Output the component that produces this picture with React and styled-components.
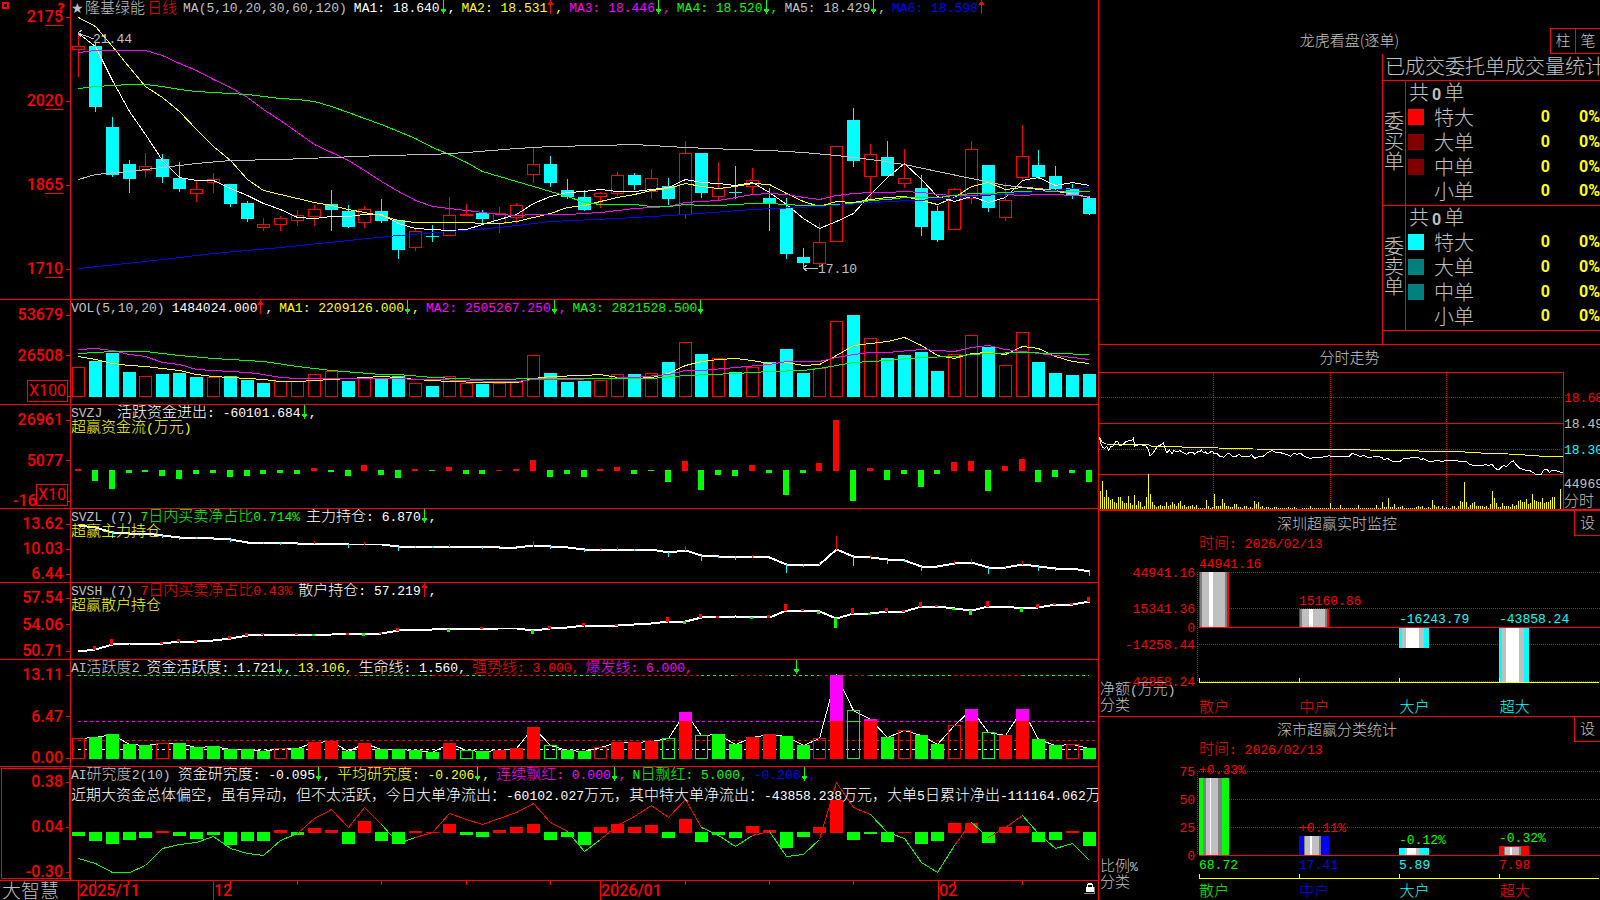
import React from "react";
import styled, { createGlobalStyle } from "styled-components";

const RED = "#ff0000";
const GREEN = "#00ff00";
const CYAN = "#00ffff";
const YELLOW = "#ffff00";
const MAGENTA = "#ff00ff";
const BLUE = "#0000ff";
const WHITE = "#ffffff";
const SILVER = "#c0c0c0";
const GRAY = "#808080";

/* ---------- data ---------- */

// [rising or falling, high, body top, body bottom, low]
const candles = [
  ["r", 33, 46, 50, 77], ["c", 43, 46, 107, 112], ["c", 117, 127, 175, 177], ["c", 160, 164, 179, 193],
  ["r", 153, 166, 171, 177], ["c", 154, 159, 177, 183], ["c", 162, 178, 189, 192], ["r", 181, 189, 194, 202],
  ["r", 173, 179, 183, 193], ["c", 184, 184, 204, 207], ["c", 201, 203, 219, 222], ["r", 218, 224, 228, 231],
  ["r", 216, 218, 225, 231], ["r", 210, 215, 221, 226], ["r", 205, 209, 217, 226], ["c", 190, 204, 210, 231],
  ["c", 205, 211, 227, 228], ["r", 206, 209, 223, 228], ["c", 199, 211, 221, 223], ["c", 220, 220, 250, 259],
  ["r", 229, 231, 248, 251], ["c", 225, 236, 237, 242], ["r", 197, 215, 236, 236], ["r", 204, 214, 216, 216],
  ["c", 210, 213, 219, 225], ["r", 207, 213, 224, 233], ["r", 203, 205, 218, 223], ["r", 148, 164, 175, 183],
  ["c", 156, 164, 183, 187], ["c", 179, 190, 197, 199], ["c", 190, 197, 210, 211], ["r", 192, 193, 197, 208],
  ["r", 172, 175, 194, 196], ["c", 173, 175, 185, 190], ["r", 169, 178, 192, 199], ["c", 178, 186, 199, 205],
  ["r", 141, 153, 215, 219], ["c", 153, 153, 193, 198], ["r", 162, 188, 197, 200], ["c", 166, 192, 193, 199],
  ["r", 168, 180, 187, 194], ["c", 188, 198, 203, 231], ["c", 198, 208, 254, 259], ["c", 248, 257, 263, 268],
  ["r", 223, 242, 264, 267], ["r", 146, 146, 242, 242], ["c", 108, 120, 161, 167], ["r", 144, 154, 177, 200],
  ["c", 141, 157, 176, 176], ["r", 149, 178, 184, 188], ["c", 175, 188, 227, 236], ["c", 206, 211, 240, 242],
  ["r", 188, 189, 230, 230], ["r", 141, 149, 199, 204], ["c", 165, 165, 208, 212], ["r", 183, 200, 218, 221],
  ["r", 125, 156, 178, 180], ["c", 150, 165, 177, 179], ["c", 166, 176, 189, 191], ["c", 184, 188, 195, 199],
  ["c", 196, 198, 214, 215],
];

const all = (ys) => ys.map((y, i) => [i, y]);

const ma1 = all([33, 46, 80, 111, 134, 160, 177, 180, 180, 188, 195, 203, 209, 217, 218, 216, 216, 214, 214, 223, 228, 229, 230, 229, 224, 219, 214, 203, 196, 192, 191, 189, 191, 191, 189, 187, 179, 182, 183, 185, 182, 192, 204, 218, 228, 221, 213, 194, 177, 163, 179, 196, 201, 196, 202, 197, 180, 177, 185, 182, 185]);
const ma2 = all([17, 26, 46, 67, 86, 97, 111, 129, 146, 160, 179, 190, 194, 198, 202, 205, 209, 212, 215, 220, 222, 222, 222, 222, 223, 223, 221, 217, 213, 207, 205, 201, 197, 194, 190, 188, 183, 186, 188, 186, 183, 184, 193, 201, 206, 201, 202, 199, 197, 196, 200, 204, 197, 186, 182, 189, 187, 189, 191, 193, 197]);
const ma3 = all([52, 50, 50, 50, 50, 55, 63, 70, 79, 87, 97, 109, 120, 132, 144, 152, 160, 170, 181, 191, 200, 206, 208, 210, 212, 214, 215, 214, 214, 214, 213, 212, 210, 208, 207, 206, 202, 201, 200, 197, 194, 193, 194, 197, 199, 195, 193, 192, 192, 191, 192, 194, 195, 195, 194, 194, 195, 194, 194, 195, 196]);
const ma4 = all([88, 86, 85, 84, 84, 86, 89, 91, 92, 93, 94, 96, 98, 99, 101, 106, 112, 118, 124, 131, 138, 147, 154, 162, 171, 176, 181, 186, 191, 196, 202, 204, 204, 204, 206, 206, 204, 205, 205, 204, 203, 203, 204, 205, 205, 204, 203, 200, 199, 197, 197, 197, 195, 193, 193, 192, 191, 191, 191, 191, 191]);
const ma5 = [[0, 179], [1, 174], [3, 171], [5, 167], [7, 163], [9, 160], [12, 159], [15, 157], [18, 155], [21, 154], [23, 152], [26, 148], [28, 146], [31, 145], [33, 144], [36, 147], [39, 149], [41, 150], [43, 152], [45, 155], [47, 159], [49, 164], [51, 171], [53, 178], [55, 185], [57, 188], [58, 190], [59, 193], [60, 197]];
const ma6 = [[0, 268], [4, 261], [8, 253], [12, 247], [16, 240], [19, 235], [22, 231], [25, 227], [28, 221], [32, 218], [36, 214], [40, 209], [44, 206], [48, 201], [51, 199], [53, 196], [57, 191], [60, 187]];

const volumes = [30, 36, 44, 25, 21, 23, 24, 20, 20, 21, 17, 14, 16, 16, 23, 26, 16, 19, 19, 21, 14, 11, 21, 14, 13, 14, 15, 42, 24, 15, 16, 17, 23, 23, 24, 35, 55, 43, 39, 25, 30, 35, 48, 24, 29, 76, 82, 59, 39, 42, 45, 26, 43, 62, 50, 32, 65, 35, 24, 22, 23];
const volumeKinds = "rcccrcccrcccrrrrcrccrcrrcrrrcccrrcrcrcrcrcccrrcrccccrrcrrcccc";
const vol1 = [[0, 56], [1, 59], [2, 63], [3, 65], [4, 66], [5, 68], [6, 70], [7, 74], [8, 76], [9, 77], [10, 78], [11, 79], [12, 81], [13, 81], [14, 80], [15, 79], [16, 78], [18, 76], [19, 77], [20, 79], [22, 81], [24, 82], [26, 82], [27, 78], [28, 76], [30, 75], [31, 74], [32, 77], [33, 78], [34, 77], [35, 73], [36, 65], [37, 61], [38, 59], [39, 58], [40, 60], [41, 63], [42, 62], [43, 65], [44, 64], [45, 55], [46, 45], [47, 43], [48, 41], [49, 37], [50, 45], [51, 55], [52, 58], [53, 53], [54, 52], [55, 54], [56, 46], [57, 48], [58, 56], [59, 61], [60, 63]];
const vol2 = [[0, 49], [1, 48], [2, 50], [3, 54], [4, 56], [5, 62], [6, 64], [7, 69], [8, 70], [10, 72], [11, 74], [12, 77], [13, 78], [18, 78], [21, 79], [25, 81], [26, 81], [27, 79], [29, 79], [31, 78], [33, 77], [35, 74], [36, 70], [37, 70], [39, 67], [41, 64], [42, 61], [44, 61], [45, 57], [46, 54], [47, 52], [48, 52], [50, 49], [52, 51], [53, 47], [54, 45], [55, 49], [56, 51], [57, 53], [58, 55], [60, 59]];
const vol3 = [[0, 53], [2, 51], [4, 51], [6, 55], [8, 58], [11, 61], [13, 66], [15, 70], [18, 74], [19, 74], [21, 77], [24, 79], [28, 78], [34, 78], [36, 75], [39, 73], [41, 71], [43, 70], [44, 68], [46, 62], [48, 60], [50, 57], [52, 56], [53, 54], [54, 53], [56, 52], [58, 53], [60, 54]];

const flows = [2, -11, -19, -3, -2, -6, -9, -4, -3, -7, -6, -4, -3, -4, 3, -2, -6, 6, -5, -8, 2, -1, 4, -4, -4, 1, 2, 11, -7, -4, -7, 2, 4, -4, -1, -12, 10, -20, -5, -6, 6, -3, -25, -3, 8, 51, -31, 3, -10, -4, -17, -4, 9, 10, -21, 5, 12, -12, -7, -3, -12];

const mainHold = [[0, 16], [1, 18], [2, 23], [3, 24], [4, 24], [5, 26], [6, 28], [7, 28], [8, 29], [9, 30], [10, 33], [12, 33], [13, 34], [16, 35], [18, 35], [19, 37], [23, 37], [25, 38], [26, 38], [27, 36], [28, 37], [29, 38], [30, 40], [34, 40], [35, 43], [36, 41], [37, 46], [38, 47], [41, 48], [42, 55], [44, 55], [45, 40], [46, 47], [47, 48], [48, 50], [49, 51], [50, 57], [51, 57], [52, 54], [53, 53], [54, 58], [55, 58], [56, 55], [57, 57], [58, 59], [59, 59], [60, 62]];
const mainTicks = [0, -3, -5, 0, 0, -2, -2, -1, -1, -2, 0, -1, -2, -1, 2, 0, -3, 2, 0, -4, -1, -1, 2, 0, -1, 0, 0, 4, -2, 0, -2, 1, 2, -1, 0, -4, 4, -5, -1, -3, 2, 0, -8, -2, 2, 13, -9, 2, -4, -1, -4, -1, 2, 3, -6, 1, 3, -4, -2, 0, -4];

const retailHold = [[0, 68], [1, 66], [2, 61], [3, 60], [5, 60], [6, 58], [7, 58], [8, 57], [9, 55], [10, 52], [11, 51], [15, 51], [18, 50], [19, 47], [21, 46], [25, 45], [26, 45], [27, 47], [28, 45], [29, 44], [30, 42], [32, 42], [34, 40], [35, 38], [36, 38], [37, 34], [39, 33], [41, 34], [42, 27], [43, 27], [44, 28], [45, 35], [46, 30], [47, 30], [48, 28], [49, 28], [50, 23], [51, 23], [52, 25], [53, 27], [54, 23], [55, 23], [56, 25], [57, 24], [58, 21], [59, 21], [60, 18]];
const retailTicks = [0, 3, 5, 0, 0, 1, 2, 1, 0, 2, 2, 1, 0, 1, -1, 0, 1, -2, 1, 2, 0, 0, -2, 0, 1, 0, 0, -3, 2, 0, 2, 0, 1, 0, 0, 4, -2, 3, 1, 0, -1, 2, 6, 1, -2, -9, 5, -1, 3, 1, 4, 1, -1, -4, 5, 0, -3, 3, 1, 1, 4];

const activity = [78, 77, 74, 84, 85, 83, 83, 87, 86, 89, 89, 91, 88, 88, 82, 81, 91, 83, 89, 89, 90, 92, 83, 90, 91, 90, 88, 67, 85, 90, 91, 87, 82, 82, 81, 78, 52, 75, 74, 84, 77, 74, 76, 85, 78, 15, 50, 59, 77, 70, 75, 84, 65, 49, 72, 75, 49, 79, 85, 84, 88];
// capital letters are filled bars, small ones are outlines
const activityKinds = "rGGGGrGGGGGGrGRRGRGGGGRgGRRRgGGrRRRgRgGGRRGGrRgRGrGGrRgRRGGrG";
const signalRuns = [[0, 13, "g"], [13, 15, "r"], [15, 16, "g"], [16, 17, "r"], [17, 21, "g"], [21, 23, "r"], [23, 24, "g"], [24, 28, "r"], [28, 31, "g"], [31, 37, "r"], [37, 39, "g"], [39, 41, "r"], [41, 44, "g"], [44, 47, "r"], [47, 52, "g"], [52, 56, "r"], [56, 60, "g"]];

const research = [-4, -9, -12, -8, -6, 2, -4, -7, -3, -13, -9, -9, 3, -3, 5, 3, -12, 12, -9, -12, 2, 1, 9, -3, -5, 3, 6, 9, -8, -5, -13, 6, 9, 6, 8, -6, 14, -10, -3, -6, 7, 3, -16, -5, 6, 33, -8, -2, -10, 1, -12, -9, 10, 10, -11, 6, 7, -10, -8, 2, -14];
const researchLine = [91, 96, 105, 105, 98, 81, 77, 75, 69, 81, 86, 88, 73, 66, 51, 42, 60, 40, 57, 76, 70, 65, 46, 52, 57, 51, 45, 36, 55, 64, 84, 72, 58, 49, 38, 50, 32, 60, 68, 79, 68, 64, 89, 87, 72, 15, 40, 47, 65, 71, 95, 105, 78, 55, 70, 60, 48, 66, 81, 76, 93];
const researchRuns = [[0, 13, "g"], [13, 18, "r"], [18, 20, "g"], [20, 29, "r"], [29, 31, "g"], [31, 37, "r"], [37, 40, "g"], [40, 41, "r"], [41, 44, "g"], [44, 47, "r"], [47, 52, "g"], [52, 53, "r"], [53, 54, "g"], [54, 56, "r"], [56, 60, "g"]];

const minutePrice = "28,292 33,312 38,322 44,325 50,320 56,330 62,320 70,318 78,304 84,305 90,318 98,314 108,304 118,302 126,300 130,295 134,318 142,316 150,312 158,316 168,318 175,328 180,348 188,341 196,328 204,318 214,314 220,308 226,328 231,338 238,329 246,341 252,331 262,336 270,332 280,338 290,343 298,337 308,337 314,343 322,336 330,335 334,329 340,338 346,335 352,342 358,338 366,333 372,340 382,341 390,349 402,352 412,340 418,341 428,349 440,348 448,343 456,350 466,350 478,350 484,343 494,355 506,350 520,349 530,340 540,334 546,331 556,336 566,336 580,341 590,343 602,349 612,340 620,343 632,340 644,350 660,355 676,352 690,352 706,350 718,347 726,350 776,350 786,340 800,345 812,350 822,346 834,352 848,351 864,350 876,352 882,360 892,354 902,362 916,365 930,364 942,355 954,357 964,352 984,352 994,360 1000,355 1010,362 1026,365 1040,360 1058,365 1068,360 1080,363 1100,362 1118,366 1128,363 1138,374 1154,376 1172,378 1186,374 1196,376 1206,373 1216,386 1226,389 1236,380 1242,376 1250,380 1262,366 1270,363 1280,376 1290,385 1306,390 1320,392 1336,402 1354,402 1362,389 1372,388 1378,398 1386,391 1398,392 1406,394 1412,398 1418,398";
const minuteAverage = "28,292 36,306 48,312 175,314 185,319 275,321 385,324 490,327 740,328 938,332 1125,336 1190,340 1255,342 1322,346 1360,349 1418,349";
const minuteVolume = [54, 84, 36, 57, 36, 28, 30, 22, 18, 36, 36, 24, 18, 18, 40, 18, 12, 42, 12, 24, 20, 6, 9, 36, 105, 45, 20, 12, 6, 9, 12, 9, 9, 20, 9, 12, 21, 15, 9, 18, 24, 9, 12, 6, 9, 9, 12, 6, 12, 3, 2, 3, 3, 26, 9, 3, 6, 45, 9, 9, 9, 30, 18, 9, 9, 6, 6, 15, 15, 6, 6, 3, 9, 9, 3, 6, 3, 24, 15, 21, 6, 9, 3, 6, 6, 3, 3, 6, 6, 3, 2, 2, 3, 3, 6, 3, 3, 6, 2, 0, 0, 2, 3, 3, 3, 9, 3, 3, 3, 2, 2, 2, 2, 3, 3, 18, 3, 3, 3, 3, 12, 3, 3, 2, 3, 3, 3, 3, 3, 12, 3, 3, 2, 3, 2, 2, 3, 2, 12, 3, 3, 21, 6, 6, 33, 6, 6, 15, 3, 6, 6, 9, 3, 3, 3, 3, 2, 3, 6, 9, 6, 9, 3, 3, 6, 3, 27, 12, 6, 9, 3, 9, 3, 6, 3, 2, 9, 9, 3, 9, 24, 21, 81, 21, 6, 12, 18, 21, 9, 9, 9, 9, 6, 9, 3, 15, 54, 33, 18, 6, 6, 18, 9, 9, 9, 6, 15, 9, 12, 24, 27, 21, 20, 30, 15, 18, 45, 27, 24, 20, 20, 33, 18, 20, 22, 27, 36, 36, 0, 0, 60];

const netStripes = (c) => [[1, c], [2, GRAY], [7, SILVER], [4, WHITE], [12, SILVER], [2, GRAY], [2, c]];
const outStripes = [[3, CYAN], [4, SILVER], [13, WHITE], [5, SILVER], [5, CYAN]];

const netAmount = {
  title: "深圳超赢实时监控",
  corner: ["净额(万元)", "分类"],
  cornerBottom: 1,
  height: 131,
  zero: 75,
  unit: 0.00122,
  rule: 130,
  ticks: [44941.16, 15341.36, 0, -14258.44, -43858.24],
  format: (v) => (v ? v.toFixed(2) : "0"),
  bars: [
    { name: "散户", value: 44941.16, tag: "44941.16", color: RED, stripes: netStripes(RED) },
    { name: "中户", value: 15160.86, tag: "15160.86", color: RED, stripes: netStripes(RED) },
    { name: "大户", value: -16243.79, tag: "-16243.79", color: CYAN, stripes: outStripes },
    { name: "超大", value: -43858.24, tag: "-43858.24", color: CYAN, stripes: outStripes },
  ],
};

const shares = {
  title: "深市超赢分类统计",
  corner: ["比例%", "分类"],
  cornerBottom: 8,
  height: 121,
  zero: 97,
  unit: 1.12,
  rule: 120,
  ticks: [75, 50, 25, 0],
  format: String,
  bars: [
    { name: "散户", value: 68.72, tag: "+0.33%", tagColor: RED, color: GREEN, below: "68.72", stripes: [[4, GREEN], [3, GRAY], [4, SILVER], [1, WHITE], [7, SILVER], [4, GRAY], [7, GREEN]] },
    { name: "中户", value: 17.41, tag: "+0.11%", tagColor: RED, color: BLUE, below: "17.41", stripes: [[5, BLUE], [1, GRAY], [5, SILVER], [2, WHITE], [7, SILVER], [2, GRAY], [8, BLUE]] },
    { name: "大户", value: 5.89, tag: "-0.12%", tagColor: GREEN, color: CYAN, below: "5.89", stripes: [[6, CYAN], [2, SILVER], [9, WHITE], [3, SILVER], [10, CYAN]] },
    { name: "超大", value: 7.98, tag: "-0.32%", tagColor: GREEN, color: RED, below: "7.98", stripes: [[5, RED], [1, GRAY], [5, SILVER], [2, WHITE], [7, SILVER], [2, GRAY], [8, RED]] },
  ],
};

const orders = [
  { side: "委买单", colors: [RED, "#800000", "#800000", "#000000"] },
  { side: "委卖单", colors: [CYAN, "#008080", "#008080", "#000000"] },
];
const orderSizes = ["特大", "大单", "中单", "小单"];

/* ---------- helpers ---------- */

const W = 1027;
const X = (i) => Math.round(7 + 16.85 * i);
const line = (pts) => pts.map(([i, y]) => `${X(i) + 0.5},${y + 0.5}`).join(" ");
const shade = (k) => (k === "g" || k === "G" ? GREEN : k === "c" ? CYAN : RED);

function yAt(pts, i) {
  const n = pts.findIndex((p) => p[0] >= i);
  const [i2, y2] = pts[n];
  if (i2 === i) return y2;
  const [i1, y1] = pts[n - 1];
  return Math.round(y1 + ((y2 - y1) * (i - i1)) / (i2 - i1));
}

/* ---------- shared parts ---------- */

// Chinese glyphs are set larger than the fixed-width digits around them
function Mixed({ children }) {
  return children
    .split(/([\u4e00-\u9fff，：]+)/)
    .map((run, i) => (i % 2 ? <Hanzi key={i}>{run}</Hanzi> : run));
}

function Arrow({ up }) {
  return (
    <ArrowIcon viewBox="0 0 8 14" aria-hidden="true">
      {up ? (
        <path d="M3 0h1v14h-1zM2 2h3v1h-3zM1 3h5v2h-5z" fill={RED} />
      ) : (
        <path d="M3 0h1v14h-1zM2 11h3v1h-3zM1 9h5v2h-5z" fill={GREEN} />
      )}
    </ArrowIcon>
  );
}

function Item({ color = SILVER, dir, comma = true, children }) {
  return (
    <LegendItem $color={color}>
      <Mixed>{children}</Mixed>
      {dir && <Arrow up={dir === "up"} />}
      {comma && ","}
    </LegendItem>
  );
}

function Name({ children }) {
  return (
    <LegendName>
      <Mixed>{children}</Mixed>
    </LegendName>
  );
}

function Axis({ labels, unit, underline, selected, top = 8, bottom = 1, inset }) {
  return (
    <AxisColumn $selected={selected} $top={top} $bottom={bottom}>
      {labels.map((l, i) => (
        <AxisLabel key={i} $inset={inset && i === labels.length - 1}>
          {underline ? (
            <span>
              {l.slice(0, -2)}
              <Cents>{l.slice(-2)}</Cents>
            </span>
          ) : (
            l
          )}
        </AxisLabel>
      ))}
      {unit && <Unit>{unit}</Unit>}
    </AxisColumn>
  );
}

function Plot({ h, children }) {
  return (
    <PlotSvg viewBox={`0 0 ${W} ${h}`} preserveAspectRatio="none">
      {children}
    </PlotSvg>
  );
}

function Curve({ points, color, width = 1 }) {
  return <polyline points={line(points)} stroke={color} strokeWidth={width} fill="none" />;
}

function Column({ i, top, bottom, color, hollow }) {
  if (hollow) {
    return <rect x={X(i) - 5.5} y={top + 0.5} width="12" height={Math.max(bottom - top - 1, 1)} fill="none" stroke={color} />;
  }
  return <rect x={X(i) - 6} y={top} width="13" height={Math.max(bottom - top, 1)} fill={color} />;
}

/* ---------- left panels ---------- */

function PricePanel() {
  return (
    <Panel>
      <Axis labels={["2175", "2020", "1865", "1710"]} underline top={10} bottom={23} />
      <Marker viewBox="0 0 8 8">
        <path d="M1 1h5v5h-5z" stroke={RED} strokeWidth="2" fill="none" />
      </Marker>
      <HelpMark>?</HelpMark>
      <Chart>
        <Plot h={299}>
          {candles.map(([k, hi, top, bottom, lo], i) => (
            <g key={i}>
              <path d={`M${X(i) + 0.5} ${hi}V${top}M${X(i) + 0.5} ${bottom}V${lo}`} stroke={shade(k)} />
              <Column i={i} top={top} bottom={bottom} color={shade(k)} hollow={k === "r"} />
            </g>
          ))}
          <Curve points={ma1} color={WHITE} />
          <Curve points={ma2} color={YELLOW} />
          <Curve points={ma3} color={MAGENTA} />
          <Curve points={ma4} color={GREEN} />
          <Curve points={ma5} color={SILVER} />
          <Curve points={ma6} color={BLUE} />
          <path d="M11 30l-4 3l3 4M7 33l16 6M736 265l-4 3l4 3M732 268.5h15" stroke={SILVER} fill="none" />
        </Plot>
        <Legend>
          <LegendTitle>
            <Star>★</Star>
            <Mixed>隆基绿能</Mixed>
            <Period>日线</Period>
          </LegendTitle>
          <Name>MA(5,10,20,30,60,120)</Name>
          <Item color={WHITE} dir="down">MA1: 18.640</Item>
          <Item color={YELLOW} dir="up">MA2: 18.531</Item>
          <Item color={MAGENTA} dir="down">MA3: 18.446</Item>
          <Item color={GREEN} dir="down">MA4: 18.520</Item>
          <Item color={SILVER} dir="down">MA5: 18.429</Item>
          <Item color={BLUE} dir="up" comma={false}>MA6: 18.598</Item>
        </Legend>
        <PriceTag style={{ left: `${(22 / W) * 100}%`, top: 32 }}>21.44</PriceTag>
        <PriceTag style={{ left: `${(747 / W) * 100}%`, top: 262 }}>17.10</PriceTag>
      </Chart>
    </Panel>
  );
}

function VolumePanel() {
  return (
    <Panel>
      <Axis labels={["53679", "26508", ""]} unit="X100" />
      <Chart>
        <Plot h={104}>
          {volumes.map((v, i) => (
            <Column key={i} i={i} top={97 - v} bottom={97} color={shade(volumeKinds[i])} hollow={volumeKinds[i] === "r"} />
          ))}
          <Curve points={vol1} color={YELLOW} />
          <Curve points={vol2} color={MAGENTA} />
          <Curve points={vol3} color={GREEN} />
        </Plot>
        <Legend>
          <Name>VOL(5,10,20)</Name>
          <Item color={WHITE} dir="up">1484024.000</Item>
          <Item color={YELLOW} dir="down">MA1: 2209126.000</Item>
          <Item color={MAGENTA} dir="down">MA2: 2505267.250</Item>
          <Item color={GREEN} dir="down" comma={false}>MA3: 2821528.500</Item>
        </Legend>
      </Chart>
    </Panel>
  );
}

function FlowPanel() {
  return (
    <Panel>
      <Axis labels={["26961", "5077", "-16"]} unit="X10" bottom={0} inset />
      <Chart>
        <Plot h={103}>
          {flows.map((v, i) => (
            <rect key={i} x={X(i) - 3} y={v > 0 ? 66 - v : 65} width="6" height={Math.abs(v)} fill={v > 0 ? RED : GREEN} />
          ))}
        </Plot>
        <Legend>
          <Name>{"SVZJ "}</Name>
          <Item color={WHITE} dir="down">活跃资金进出: -60101.684</Item>
        </Legend>
        <Subtitle><Mixed>超赢资金流(万元)</Mixed></Subtitle>
      </Chart>
    </Panel>
  );
}

function HoldPanel({ code, ratio, ratioColor, label, dir, subtitle, labels, h, points, ticks, down, tickWidth }) {
  return (
    <Panel>
      <Axis labels={labels} />
      <Chart>
        <Plot h={h}>
          <Curve points={points} color={WHITE} width={2} />
          {ticks.map((t, i) => {
            const y = yAt(points, i);
            return t !== 0 && (
              <rect key={i} x={X(i) - tickWidth + 1} y={t > 0 ? y - t : y} width={tickWidth} height={Math.abs(t) + 1} fill={t > 0 ? RED : down} />
            );
          })}
        </Plot>
        <Legend>
          <Name>{`${code} (7)`}</Name>
          <Item color={ratioColor} comma={false}>{ratio}</Item>
          <Item color={WHITE} dir={dir}>{label}</Item>
        </Legend>
        <Subtitle><Mixed>{subtitle}</Mixed></Subtitle>
      </Chart>
    </Panel>
  );
}

function ActivityPanel() {
  return (
    <Panel>
      <Axis labels={["13.11", "6.47", "0.00"]} />
      <Chart>
        <Plot h={106}>
          {signalRuns.map(([a, b, k]) => (
            <path key={a} d={`M${X(a)} 15.5H${X(b)}`} stroke={shade(k)} strokeDasharray="3 3" />
          ))}
          <path d="M7 61.5H1025" stroke={MAGENTA} strokeDasharray="3 3" />
          <path d="M7 80.5H1025" stroke={RED} strokeDasharray="3 3" />
          <path d="M7 89.5H1025" stroke={WHITE} strokeDasharray="3 3" />
          <Curve points={all(activity)} color={WHITE} />
          {activity.map((top, i) => {
            const k = activityKinds[i];
            const hollow = k === "r" || k === "g";
            return (
              <g key={i}>
                <Column i={i} top={top} bottom={99} color={shade(k)} hollow={hollow} />
                {k === "R" && top < 61 && <Column i={i} top={top} bottom={61} color={MAGENTA} />}
                {k === "g" && top < 61 && <Column i={i} top={61} bottom={62} color={GREEN} />}
              </g>
            );
          })}
          <path d="M725 0h1v14h-1zM724 11h3v1h-3zM723 9h5v2h-5z" fill={GREEN} />
        </Plot>
        <Legend>
          <Name>AI活跃度2</Name>
          <Item color={WHITE} dir="down">资金活跃度: 1.721</Item>
          <Item color={YELLOW}>13.106</Item>
          <Item color={WHITE}>生命线: 1.560</Item>
          <Item color={RED}>强势线: 3.000</Item>
          <Item color={MAGENTA}>爆发线: 6.000</Item>
        </Legend>
      </Chart>
    </Panel>
  );
}

function ResearchPanel() {
  return (
    <Panel>
      <Axis labels={["0.38", "0.04", "-0.30"]} selected />
      <Chart>
        <Plot h={113}>
          {research.map((v, i) => (
            <Column key={i} i={i} top={v > 0 ? 66 - v : 65} bottom={v > 0 ? 66 : 65 - v} color={v > 0 ? RED : GREEN} />
          ))}
          {researchRuns.map(([a, b, k]) => (
            <Curve key={a} points={all(researchLine).slice(a, b + 1)} color={shade(k)} />
          ))}
        </Plot>
        <Legend>
          <Name>AI研究度2(10)</Name>
          <Item color={WHITE} dir="down">资金研究度: -0.095</Item>
          <Item color={YELLOW} dir="down">平均研究度: -0.206</Item>
          <Item color={MAGENTA} dir="down">连续飘红: 0.000</Item>
          <Item color={GREEN}>N日飘红: 5.000</Item>
          <Item color={BLUE} dir="down">-0.206</Item>
        </Legend>
        <Comment>
          <Mixed>
            近期大资金总体偏空，虽有异动，但不太活跃，今日大单净流出：-60102.027万元，其中特大单净流出：-43858.238万元，大单5日累计净出-111164.062万元
          </Mixed>
        </Comment>
      </Chart>
    </Panel>
  );
}

function DateBar() {
  return (
    <Footer>
      <Brand>大智慧</Brand>
      <Chart>
        <Plot h={19}>
          <path
            d="M24.5 0v4M57.5 0v4M159.5 0v4M226.5 0v4M310.5 0v4M395.5 0v4M479.5 0v4M546.5 0v4M614.5 0v4M698.5 0v4M782.5 0v4M883.5 0v4M951.5 0v4"
            stroke={RED}
          />
        </Plot>
        <Months>
          <span />
          <Month>2025/11</Month>
          <Month>12</Month>
          <Month>2026/01</Month>
          <Month>02</Month>
        </Months>
        <LockIcon viewBox="0 0 11 12" aria-label="lock">
          <path d="M3 5V2h1V1h4v1h1v3h-1V3h-4v2z" fill={WHITE} />
          <path d="M2 5h8v5h-8z" fill={WHITE} />
          <path d="M0 11.5h10.5V5" stroke={GRAY} fill="none" />
        </LockIcon>
      </Chart>
    </Footer>
  );
}

/* ---------- right panels ---------- */

function OrderSection() {
  return (
    <Section>
      <TopHead>
        <SectionTitle>龙虎看盘(逐单)</SectionTitle>
        <Buttons>
          <HeadButton>柱</HeadButton>
          <HeadButton>笔</HeadButton>
        </Buttons>
      </TopHead>
      <OrderArea>
        <OrderTitle id="orders">已成交委托单成交量统计</OrderTitle>
        <OrderTable aria-labelledby="orders">
          <colgroup>
            <col width="23" />
            <col width="25" />
            <col width="68" />
            <col width="51" />
            <col />
          </colgroup>
          {orders.map(({ side, colors }) => (
            <tbody key={side}>
              <tr>
                <SideCell rowSpan={5} scope="rowgroup">
                  {side.split("").map((c) => (
                    <span key={c}>{c}</span>
                  ))}
                </SideCell>
                <TotalCell colSpan={4}>
                  共<b>0</b>单
                </TotalCell>
              </tr>
              {orderSizes.map((name, i) => (
                <tr key={name}>
                  <td>
                    <Swatch $color={colors[i]} />
                  </td>
                  <NameCell scope="row">{name}</NameCell>
                  <NumberCell>0</NumberCell>
                  <NumberCell>0%</NumberCell>
                </tr>
              ))}
            </tbody>
          ))}
        </OrderTable>
      </OrderArea>
    </Section>
  );
}

function MinuteSection() {
  return (
    <Section $thick>
      <MinuteTitle>分时走势</MinuteTitle>
      <MinuteBody>
        <MinuteSvg viewBox="27 96 1395 411" preserveAspectRatio="none">
          <g stroke={RED} fill="none">
            <path d="M27 97.5H1420.5V507M27 250.5H1420M27 403.5H1420" />
            <path d="M27 172.5H1420M27 328.5H1420M370.5 99V507M721.5 99V507M1069.5 99V507" strokeDasharray="1 1" />
          </g>
          <g fill={YELLOW}>
            {minuteVolume.map((v, i) => (
              <rect key={i} x={30 + i * 6} y={507 - v} width="3" height={v} />
            ))}
          </g>
          <polyline points={minuteAverage} stroke={YELLOW} fill="none" />
          <polyline points={minutePrice} stroke={WHITE} fill="none" />
        </MinuteSvg>
        <MinuteScale>
          <ScaleLabel $color={RED}>18.68</ScaleLabel>
          <ScaleLabel $color={SILVER}>18.49</ScaleLabel>
          <ScaleLabel $color={CYAN}>18.30</ScaleLabel>
          <ScaleFoot>
            <span>44969</span>
            <span>
              <Hanzi>分时</Hanzi>
            </span>
          </ScaleFoot>
        </MinuteScale>
      </MinuteBody>
    </Section>
  );
}

function ColumnSection({ title, corner, cornerBottom, height, zero, unit, rule, ticks, format, bars }) {
  const y = (v) => Math.round(zero - v * unit);
  return (
    <Section>
      <SubHead>
        <SectionTitle>{title}</SectionTitle>
        <Buttons>
          <HeadButton>设</HeadButton>
        </Buttons>
      </SubHead>
      <DateLine>
        <Mixed>时间: 2026/02/13</Mixed>
      </DateLine>
      <ColumnBody $height={height}>
        <TickColumn>
          {ticks.map((t) => (
            <TickLabel key={t} style={{ top: y(t) - 6 }}>{format(t)}</TickLabel>
          ))}
        </TickColumn>
        <ColumnPlot>
          <PlotSvg viewBox={`0 0 403 ${height}`} preserveAspectRatio="none">
            <path d={`M0.5 ${y(ticks[0])}V${y(ticks[ticks.length - 1])}`} stroke={RED} strokeDasharray="1 1" />
            {ticks.map((t) => (
              <path key={t} d={`M2 ${y(t) + 0.5}H403`} stroke={RED} strokeDasharray={t ? "1 1" : undefined} />
            ))}
            {bars.map(({ value, stripes, name, color }, i) => {
              const top = value > 0 ? y(value) : zero + 1;
              const bottom = value > 0 ? zero : y(value) + 1;
              let x = 2 + i * 100;
              return (
                <g key={name}>
                  {stripes.map(([w, fill], n) => {
                    const at = x;
                    x += w;
                    return <rect key={n} x={at} y={top} width={w} height={bottom - top} fill={fill} />;
                  })}
                  {name === "超大" && value > 0 && <rect x={302} y={top} width="30" height="1" fill={color} />}
                </g>
              );
            })}
            <path
              d={`M2.5 ${rule - 4}V${rule + 0.5}H402M102.5 ${rule - 4}V${rule}M202.5 ${rule - 4}V${rule}M302.5 ${rule - 4}V${rule}`}
              stroke={YELLOW}
              fill="none"
            />
          </PlotSvg>
          {bars.map((b, i) => (
            <BarTag
              key={b.name}
              $color={b.tagColor || b.color}
              style={{ left: `${(2 + i * 100) / 4.03}%`, top: (b.value > 0 ? y(b.value) : zero) - 15 }}
            >
              {b.tag}
            </BarTag>
          ))}
          {bars.map((b, i) => b.below && (
            <BarTag key={b.name} $color={b.color} style={{ left: `${(2 + i * 100) / 4.03}%`, top: zero + 3 }}>
              {b.below}
            </BarTag>
          ))}
        </ColumnPlot>
      </ColumnBody>
      <Categories>
        {bars.map((b) => (
          <Category key={b.name} $color={b.color}>{b.name}</Category>
        ))}
      </Categories>
      <Corner $bottom={cornerBottom}>
        {corner.map((c) => (
          <span key={c}><Mixed>{c}</Mixed></span>
        ))}
      </Corner>
    </Section>
  );
}

export default function App() {
  return (
    <>
      <GlobalStyle />
      <Screen>
        <Left>
          <PricePanel />
          <VolumePanel />
          <FlowPanel />
          <HoldPanel
            code="SVZL"
            ratio="7日内买卖净占比0.714%"
            ratioColor={GREEN}
            label="主力持仓: 6.870"
            dir="down"
            subtitle="超赢主力持仓"
            labels={["13.62", "10.03", "6.44"]}
            h={73}
            points={mainHold}
            ticks={mainTicks}
            down={CYAN}
            tickWidth={1}
          />
          <HoldPanel
            code="SVSH"
            ratio="7日内买卖净占比0.43%"
            ratioColor={RED}
            label="散户持仓: 57.219"
            dir="up"
            subtitle="超赢散户持仓"
            labels={["57.54", "54.06", "50.71"]}
            h={76}
            points={retailHold}
            ticks={retailTicks}
            down={GREEN}
            tickWidth={3}
          />
          <ActivityPanel />
          <ResearchPanel />
          <DateBar />
        </Left>
        <Right>
          <OrderSection />
          <MinuteSection />
          <ColumnSection {...netAmount} />
          <ColumnSection {...shares} />
        </Right>
      </Screen>
    </>
  );
}

/* ---------- styles ---------- */

const GlobalStyle = createGlobalStyle`
  * {
    box-sizing: border-box;
  }
  body {
    margin: 0;
    background: #000;
    color: ${SILVER};
    font-family: "Liberation Mono", "Noto Sans CJK SC", monospace;
    font-size: 13px;
    line-height: 16px;
    overflow: hidden;
  }
`;

const Screen = styled.main`
  display: grid;
  grid-template-columns: minmax(0, 1099fr) minmax(0, 501fr);
  min-height: 100vh;
`;

const Left = styled.div`
  display: grid;
  grid-template-rows: 300fr 105fr 104fr 74fr 77fr 107fr 114fr 19fr;
  border-right: 1px solid ${RED};
`;

const Right = styled.div`
  display: grid;
  grid-template-rows: 345fr 166fr 206fr 183fr;
`;

const Panel = styled.section`
  position: relative;
  display: grid;
  grid-template-columns: 71px minmax(0, 1fr);
  min-height: 0;
  border-bottom: 1px solid ${RED};
`;

const AxisColumn = styled.div`
  position: relative;
  display: flex;
  flex-direction: column;
  justify-content: space-between;
  padding-top: ${({ $top }) => $top}px;
  padding-bottom: ${({ $bottom }) => $bottom}px;
  border-right: 1px solid ${RED};
  outline: ${({ $selected }) => ($selected ? `1px solid ${RED}` : "none")};
  outline-offset: -2px;
`;

const AxisLabel = styled.div`
  display: flex;
  justify-content: flex-end;
  align-items: center;
  gap: 3px;
  height: 14px;
  color: ${RED};
  font: 500 16px/14px Roboto, sans-serif;
  padding-left: 13px;

  &::after {
    content: "";
    width: 4px;
    height: 1px;
    background: ${RED};
    margin-left: ${({ $inset }) => ($inset ? "auto" : 0)};
  }
`;

const Cents = styled.span`
  text-decoration: underline 1px;
  text-underline-offset: 3px;
`;

const Unit = styled.div`
  position: absolute;
  right: 2px;
  bottom: 2px;
  height: 22px;
  padding: 0 1px;
  border: 1px solid ${RED};
  background: #000;
  color: ${RED};
  font: 400 16px/20px Roboto, sans-serif;
`;

const Marker = styled.svg`
  position: absolute;
  left: 2px;
  top: 2px;
  width: 8px;
  height: 8px;
`;

const HelpMark = styled.span`
  position: absolute;
  left: 57px;
  top: 0;
  color: ${RED};
  font: 700 14px/16px "DejaVu Sans", sans-serif;
`;

const Chart = styled.div`
  position: relative;
  overflow: hidden;
  min-width: 0;
`;

const PlotSvg = styled.svg`
  position: absolute;
  inset: 0;
  width: 100%;
  height: 100%;
  shape-rendering: crispEdges;
`;

const Legend = styled.div`
  position: relative;
  display: flex;
  gap: 6px;
  height: 16px;
  line-height: 18px;
  white-space: pre;
`;

const LegendItem = styled.span`
  display: flex;
  align-items: baseline;
  height: 16px;
  color: ${({ $color }) => $color};
`;

const LegendName = styled.span`
  margin-right: 1px;
`;

const LegendTitle = styled.h1`
  display: flex;
  align-items: baseline;
  margin: 0;
  height: 16px;
  font-size: 13px;
  font-weight: 400;
`;

const Star = styled.span`
  width: 14px;
  font: 14px/16px "DejaVu Sans", sans-serif;
`;

// zero line height keeps the larger glyphs from pushing the row taller
const Hanzi = styled.span`
  font: 300 15px/0 "Noto Sans CJK SC", sans-serif;
`;

const Period = styled(Hanzi)`
  color: ${RED};
  margin-left: 2px;
`;

const ArrowIcon = styled.svg`
  width: 8px;
  height: 14px;
  align-self: flex-start;
  shape-rendering: crispEdges;
`;

const Subtitle = styled.div`
  position: relative;
  color: ${YELLOW};
`;

const Comment = styled.p`
  position: relative;
  margin: 6px 0 0;
  color: ${WHITE};
  white-space: nowrap;
`;

const PriceTag = styled.span`
  position: absolute;
  color: ${SILVER};
`;

const Footer = styled.footer`
  display: grid;
  grid-template-columns: 71px minmax(0, 1fr);
  min-height: 0;
`;

const Brand = styled.div`
  padding-left: 2px;
  font: 300 19px/17px "Noto Sans CJK SC", sans-serif;
`;

const Months = styled.div`
  position: relative;
  display: grid;
  grid-template-columns: 7fr 135fr 387fr 338fr 160fr;
  height: 100%;
`;

const Month = styled.span`
  border-left: 1px solid ${RED};
  color: ${RED};
  font: 500 16px/19px Roboto, sans-serif;
`;

const LockIcon = styled.svg`
  position: absolute;
  right: 3px;
  top: 1px;
  width: 11px;
  height: 12px;
  shape-rendering: crispEdges;
`;

const Section = styled.section`
  position: relative;
  display: flex;
  flex-direction: column;
  min-height: 0;
  overflow: hidden;
  border-bottom: ${({ $thick }) => ($thick ? 2 : 1)}px solid ${RED};

  &:last-child {
    border-bottom: 0;
  }
`;

const TopHead = styled.header`
  display: grid;
  grid-template-columns: 1fr auto 1fr;
  height: 54px;
  padding-top: 28px;
`;

const SubHead = styled.header`
  display: grid;
  grid-template-columns: 178px 1fr auto;
  height: 25px;
`;

const SectionTitle = styled.h2`
  grid-column: 2;
  margin: 0;
  font: 300 15px/23px "Noto Sans CJK SC", sans-serif;
`;

const Buttons = styled.div`
  display: flex;
  justify-content: flex-end;
`;

const HeadButton = styled.button`
  width: 25px;
  height: 26px;
  padding: 0 0 2px;
  border: 1px solid ${RED};
  border-right: 0;
  background: #000;
  color: ${SILVER};
  font: 300 15px/22px "Noto Sans CJK SC", sans-serif;

  ${SubHead} & {
    width: 26px;
    height: 25px;
    border-top: 0;
  }
`;

const OrderArea = styled.div`
  flex: 1;
  width: 218px;
  margin-left: auto;
  border-left: 1px solid ${RED};
  overflow: hidden;
`;

const OrderTitle = styled.h3`
  margin: 0;
  height: 27px;
  padding-left: 2px;
  border-bottom: 1px solid ${RED};
  font: 300 20px/23px "Noto Sans CJK SC", sans-serif;
  white-space: nowrap;
  overflow: hidden;
`;

const OrderTable = styled.table`
  width: 100%;
  table-layout: fixed;
  border-collapse: separate;
  border-spacing: 0;
  font: 300 20px/20px "Noto Sans CJK SC", sans-serif;

  tr:last-child td,
  tr:last-child th {
    border-bottom: 1px solid ${RED};
  }
  td,
  th {
    height: 25px;
    padding: 0 0 4px;
    line-height: 18px;
  }
`;

const SideCell = styled.th`
  border-right: 1px solid ${RED};
  border-bottom: 1px solid ${RED};
  font-weight: 300;

  span {
    display: block;
    line-height: 20px;
  }
`;

const TotalCell = styled.td`
  && {
    padding-left: 3px;
  }

  b {
    margin: 0 3px;
    font: 700 16px/0 Roboto, sans-serif;
  }
`;

const Swatch = styled.div`
  width: 16px;
  height: 16px;
  margin-left: 2px;
  background: ${({ $color }) => $color};
`;

const NameCell = styled.th`
  && {
    padding-left: 3px;
  }
  text-align: left;
  font-weight: 300;
`;

const NumberCell = styled.td`
  color: ${YELLOW};
  text-align: right;
  font: 700 16px/18px Roboto, sans-serif;
`;

const MinuteTitle = styled.h2`
  margin: 0;
  height: 27px;
  text-align: center;
  font: 300 15px/23px "Noto Sans CJK SC", sans-serif;
`;

const MinuteBody = styled.div`
  flex: 1;
  display: grid;
  grid-template-columns: minmax(0, 1fr) 36px;
  min-height: 0;
`;

// out of the sizing, so that the scale beside it sets the row
const MinuteSvg = styled.svg`
  width: 100%;
  height: 100%;
  min-height: 0;
  shape-rendering: crispEdges;

  path,
  polyline {
    vector-effect: non-scaling-stroke;
  }
`;

const MinuteScale = styled.div`
  display: flex;
  flex-direction: column;
  gap: 10px;
  padding-top: 19px;
  overflow: hidden;
`;

const ScaleLabel = styled.span`
  color: ${({ $color }) => $color};
`;

const ScaleFoot = styled.span`
  display: flex;
  flex-direction: column;
  gap: 2px;
  margin: 8px 0 -2px;
`;

const DateLine = styled.div`
  height: 16px;
  padding-left: 100px;
  color: ${RED};
  line-height: 18px;
`;

const ColumnBody = styled.div`
  display: grid;
  grid-template-columns: 98px minmax(0, 1fr);
  height: ${({ $height }) => $height}px;
`;

const TickColumn = styled.div`
  position: relative;
`;

const TickLabel = styled.span`
  position: absolute;
  right: 2px;
  color: ${RED};
`;

const ColumnPlot = styled.div`
  position: relative;
`;

const BarTag = styled.span`
  position: absolute;
  color: ${({ $color }) => $color};
`;

const Categories = styled.div`
  display: grid;
  grid-template-columns: repeat(4, 1fr);
  margin: auto 0 2px 100px;
`;

const Category = styled.span`
  color: ${({ $color }) => $color};
  font: 300 15px/16px "Noto Sans CJK SC", sans-serif;
`;

const Corner = styled.div`
  position: absolute;
  left: 1px;
  bottom: ${({ $bottom }) => $bottom}px;
  display: flex;
  flex-direction: column;
`;
